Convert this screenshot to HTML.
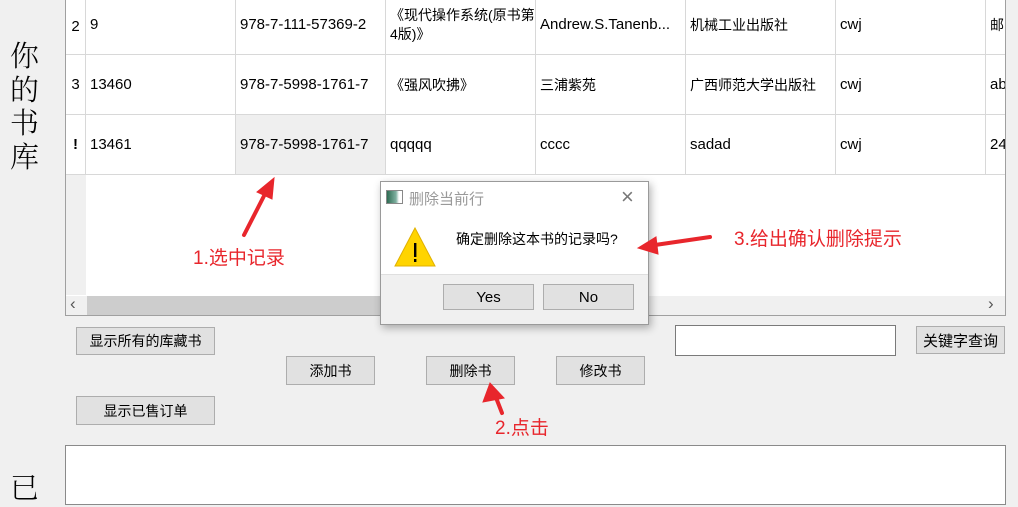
<!DOCTYPE html>
<html><head><meta charset="utf-8"><style>
*{margin:0;padding:0;box-sizing:border-box}
body{width:1018px;height:496px;background:#f0f0f0;position:relative;overflow:hidden;font-family:"Liberation Sans","Noto Sans CJK SC",sans-serif;font-size:14px;color:#000}
.abs{position:absolute}
.lbl{font-family:"Noto Serif CJK SC",serif;font-weight:300;font-size:29px;left:10px;line-height:33.5px;width:32px}
.tbl{left:65px;top:-3px;width:941px;height:319px;border:1px solid #a0a0a0;background:#fff;overflow:hidden}
.cell{position:absolute;height:60px;border-right:1px solid #d8d8d8;border-bottom:1px solid #d8d8d8;padding-left:4px;display:flex;align-items:center;font-size:15px;white-space:nowrap;overflow:hidden}
.vh{position:absolute;left:0;width:20px;background:#fff;border-right:1px solid #d8d8d8;display:flex;align-items:center;justify-content:center;font-size:15px}
.btn{position:absolute;background:#e1e1e1;border:1px solid #adadad;display:flex;align-items:center;justify-content:center;font-size:14px}
.red{color:#e8262c;font-size:19px;position:absolute}
</style></head><body>
<div class="abs lbl" style="top:38px">你<br>的<br>书<br>库</div>
<div class="abs lbl" style="top:470px">已</div>

<div class="abs tbl">
  <div class="vh" style="top:0;height:57px;border-bottom:1px solid #d8d8d8">2</div>
  <div class="vh" style="top:57px;height:60px;border-bottom:1px solid #d8d8d8">3</div>
  <div class="vh" style="top:117px;height:60px;border-bottom:1px solid #d8d8d8;font-weight:bold">!</div>
  <div class="abs" style="left:0;top:177px;width:20px;height:120px;background:#f0f0f0"></div>
  <div class="cell" style="left:20px;top:-3px;width:150px">9</div>
  <div class="cell" style="left:170px;top:-3px;width:150px">978-7-111-57369-2</div>
  <div class="cell" style="left:320px;top:-3px;width:150px;white-space:normal;line-height:19px;font-size:14px">《现代操作系统(原书第4版)》</div>
  <div class="cell" style="left:470px;top:-3px;width:150px">Andrew.S.Tanenb...</div>
  <div class="cell" style="left:620px;top:-3px;width:150px;font-size:14px">机械工业出版社</div>
  <div class="cell" style="left:770px;top:-3px;width:150px">cwj</div>
  <div class="cell" style="left:920px;top:-3px;width:150px;font-size:14px">邮电</div>
  <div class="cell" style="left:20px;top:57px;width:150px">13460</div>
  <div class="cell" style="left:170px;top:57px;width:150px">978-7-5998-1761-7</div>
  <div class="cell" style="left:320px;top:57px;width:150px;font-size:14px">《强风吹拂》</div>
  <div class="cell" style="left:470px;top:57px;width:150px;font-size:14px">三浦紫苑</div>
  <div class="cell" style="left:620px;top:57px;width:150px;font-size:14px">广西师范大学出版社</div>
  <div class="cell" style="left:770px;top:57px;width:150px">cwj</div>
  <div class="cell" style="left:920px;top:57px;width:150px">abc</div>
  <div class="cell" style="left:20px;top:117px;width:150px">13461</div>
  <div class="cell" style="left:170px;top:117px;width:150px;background:#efefef">978-7-5998-1761-7</div>
  <div class="cell" style="left:320px;top:117px;width:150px">qqqqq</div>
  <div class="cell" style="left:470px;top:117px;width:150px">cccc</div>
  <div class="cell" style="left:620px;top:117px;width:150px">sadad</div>
  <div class="cell" style="left:770px;top:117px;width:150px">cwj</div>
  <div class="cell" style="left:920px;top:117px;width:150px">24</div>
  <div class="abs" style="left:0;top:298px;width:941px;height:19px;background:#f0f0f0"></div>
  <div class="abs" style="left:21px;top:298px;width:560px;height:19px;background:#cdcdcd"></div>
  <div class="abs" style="left:4px;top:296px;font-size:17px;color:#555">&#8249;</div>
  <div class="abs" style="left:922px;top:296px;font-size:17px;color:#555">&#8250;</div>
</div>

<div class="btn" style="left:76px;top:327px;width:139px;height:28px">显示所有的库藏书</div>
<div class="btn" style="left:286px;top:356px;width:89px;height:29px">添加书</div>
<div class="btn" style="left:426px;top:356px;width:89px;height:29px">删除书</div>
<div class="btn" style="left:556px;top:356px;width:89px;height:29px">修改书</div>
<div class="btn" style="left:76px;top:396px;width:139px;height:29px">显示已售订单</div>
<div class="abs" style="left:675px;top:325px;width:221px;height:31px;background:#fff;border:1px solid #7a7a7a"></div>
<div class="btn" style="left:916px;top:326px;width:89px;height:28px;font-size:15px">关键字查询</div>
<div class="abs" style="left:65px;top:445px;width:941px;height:60px;background:#fff;border:1px solid #8a8a8a"></div>

<div class="abs" style="left:380px;top:181px;width:269px;height:144px;background:#fff;border:1px solid #9a9a9a;box-shadow:2px 3px 8px rgba(0,0,0,.3)">
  <div class="abs" style="left:5px;top:8px;width:17px;height:14px;border:1px solid #888;background:linear-gradient(90deg,#2d6b52,#7fb0a0 60%,#fff 80%)"></div>
  <div class="abs" style="left:28px;top:6px;color:#999;font-size:15px">删除当前行</div>
  <div class="abs" style="left:240px;top:2px;color:#777;font-size:22px;font-weight:300">×</div>
  <svg class="abs" style="left:13px;top:44px" width="42" height="42" viewBox="0 0 42 42"><polygon points="21,2 41,40 1,40" fill="#ffd400" stroke="#e0b000"/><rect x="20" y="17" width="2.4" height="14" fill="#000"/><rect x="20" y="33" width="2.4" height="3" fill="#000"/></svg>
  <div class="abs" style="left:75px;top:47px;font-size:14px">确定删除这本书的记录吗?</div>
  <div class="abs" style="left:0;top:92px;width:267px;height:50px;background:#f0f0f0;border-top:1px solid #dfdfdf"></div>
  <div class="btn" style="left:62px;top:102px;width:91px;height:26px;font-size:15px">Yes</div>
  <div class="btn" style="left:162px;top:102px;width:91px;height:26px;font-size:15px">No</div>
</div>

<svg class="abs" style="left:0;top:0" width="1018" height="496">
  <g fill="#e8262c" stroke="#e8262c" stroke-linecap="round">
    <line x1="244" y1="235" x2="266" y2="192" stroke-width="4"/>
    <polygon points="274,178 257,192 272,199" />
    <line x1="710" y1="237" x2="655" y2="245" stroke-width="4"/>
    <polygon points="638,248 656,237 658,254"/>
    <line x1="502" y1="413" x2="495" y2="395" stroke-width="4"/>
    <polygon points="490,383 483,402 504,398"/>
  </g>
</svg>
<div class="red" style="left:193px;top:243px">1.选中记录</div>
<div class="red" style="left:734px;top:224px">3.给出确认删除提示</div>
<div class="red" style="left:495px;top:413px">2.点击</div>
</body></html>
